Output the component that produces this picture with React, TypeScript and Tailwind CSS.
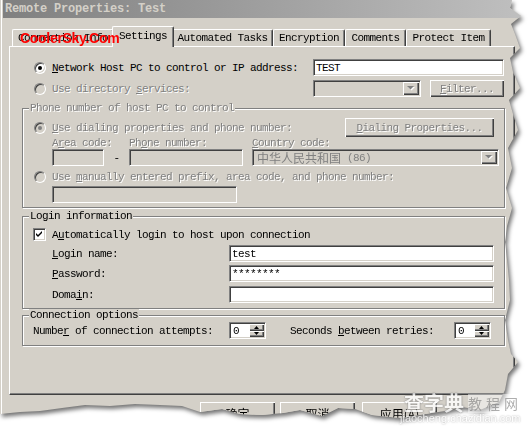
import React from "react";

const sunken =
  "border border-t-[#808080] border-l-[#808080] border-b-white border-r-white shadow-[inset_1px_1px_0_#404040,inset_-1px_-1px_0_#d4d0c8]";
const raised =
  "bg-[#d4d0c8] shadow-[inset_1px_1px_0_#fff,inset_-1px_-1px_0_#404040,inset_-2px_-2px_0_#808080]";
const dim = "text-[#808080] [text-shadow:1px_1px_0_#fff]";
const etched =
  "border border-[#808080] shadow-[inset_1px_1px_0_#fff,1px_1px_0_#fff]";

function Radio({ checked, disabled }: { checked?: boolean; disabled?: boolean }) {
  return (
    <span
      className={`flex items-center justify-center w-[12px] h-[12px] shrink-0 rounded-full border border-t-[#808080] border-l-[#808080] border-b-white border-r-white shadow-[inset_1px_1px_0_#404040,inset_-1px_-1px_0_#d4d0c8] ${
        disabled ? "bg-[#d4d0c8]" : "bg-white"
      }`}
    >
      {checked && (
        <span className={`w-[4px] h-[4px] rounded-full ${disabled ? "bg-[#808080]" : "bg-black"}`} />
      )}
    </span>
  );
}

function Check() {
  return (
    <span className={`flex w-[13px] h-[13px] shrink-0 bg-white ${sunken}`}>
      <svg width="11" height="11" viewBox="0 0 11 11">
        <path d="M2 4 L4 6 L8 2 L8 4 L4 8 L2 6 Z" fill="#000" />
      </svg>
    </span>
  );
}

function Arrow({ up, disabled }: { up?: boolean; disabled?: boolean }) {
  const d = up ? "M3.5 0 L7 3.5 L0 3.5Z" : "M0 0 L7 0 L3.5 3.5Z";
  return (
    <svg width="8" height="5" viewBox="0 0 8 5">
      {disabled && <path d={d} fill="#fff" transform="translate(1 1)" />}
      <path d={d} fill={disabled ? "#808080" : "#000"} />
    </svg>
  );
}

function TinyArrow({ up }: { up?: boolean }) {
  return (
    <svg width="5" height="3" viewBox="0 0 5 3">
      <path d={up ? "M2.5 0 L5 3 L0 3Z" : "M0 0 L5 0 L2.5 3Z"} fill="#000" />
    </svg>
  );
}

function Tab({ children, className }: { children: React.ReactNode; className: string }) {
  return (
    <div
      className={`flex items-center justify-center shrink-0 bg-[#d4d0c8] border-t border-l border-white border-r border-r-[#404040] rounded-t-[2px] shadow-[inset_-1px_0_0_#808080] ${className}`}
    >
      {children}
    </div>
  );
}

function Spin({ className }: { className: string }) {
  return (
    <div className={`flex h-[17px] bg-white p-[1px] ${sunken} ${className}`}>
      <div className="flex-1 flex items-center pl-[2px]">0</div>
      <div className="flex flex-col w-[15px]">
        <div className={`flex-1 flex items-center justify-center ${raised}`}>
          <TinyArrow up />
        </div>
        <div className={`flex-1 flex items-center justify-center ${raised}`}>
          <TinyArrow />
        </div>
      </div>
    </div>
  );
}

export default function App() {
  return (
    <div className="relative w-[528px] h-[426px] overflow-hidden bg-white">
      <div className="drop-shadow-[2px_3px_2px_rgba(0,0,0,0.55)]">
        <div className="w-[528px] h-[426px] flex flex-col bg-[#d4d0c8] text-black font-['Liberation_Mono','Noto_Sans_CJK_SC',monospace] text-[11px] tracking-[-0.6px] leading-[12px] shadow-[inset_1px_0_0_#d4d0c8,inset_2px_0_0_#fff] [clip-path:polygon(0_0,512px_0,510px_8px,521px_16px,511px_24px,515px_34px,520px_48px,510px_58px,513px_72px,520px_88px,509px_100px,513px_114px,518px_130px,508px_148px,512px_168px,506px_188px,512px_208px,507px_226px,505px_242px,507px_260px,509px_280px,510px_300px,505px_320px,508px_340px,511px_354px,518px_362px,508px_374px,505px_390px,499px_402px,480px_410px,462px_407px,445px_411px,425px_414px,400px_418px,372px_415px,355px_409px,338px_408px,322px_416px,300px_410px,283px_413px,262px_415px,240px_414px,222px_409px,200px_412px,182px_406px,160px_405px,135px_404px,110px_406px,85px_405px,62px_408px,40px_411px,20px_412px,0_414px)]">
          {/* title bar */}
          <div className="ml-[3px] h-[18px] shrink-0 flex items-center pl-[2px] bg-gradient-to-r from-[#808080] to-[#c0c0c0] text-[#d4d0c8] font-bold text-[12px] tracking-[-0.2px]">
            Remote Properties: Test
          </div>

          {/* tabs */}
          <div className="relative z-10 mt-[8px] h-[20px] pl-[12px] flex items-end">
            <Tab className="w-[102px] h-[17px]">Connection Info</Tab>
            <Tab className="relative z-10 -ml-[2px] w-[62px] h-[21px] -mb-px pb-[2px]">Settings</Tab>
            <Tab className="-ml-[2px] w-[101px] h-[17px]">Automated Tasks</Tab>
            <Tab className="w-[72px] h-[17px]">Encryption</Tab>
            <Tab className="w-[61px] h-[17px]">Comments</Tab>
            <Tab className="w-[85px] h-[17px]">Protect Item</Tab>
          </div>

          {/* panel */}
          <div className="ml-[9px] w-[506px] h-[349px] shrink-0 flex flex-col border border-t-white border-l-white border-b-[#404040] border-r-[#404040] shadow-[inset_-1px_-1px_0_#808080]">
            <div className="mt-[12px] h-[17px] flex items-center">
              <span className="ml-[24px]">
                <Radio checked />
              </span>
              <span className="ml-[6px] w-[261px]">
                <u>N</u>etwork Host PC to control or IP address:
              </span>
              <div className={`w-[191px] h-[17px] flex items-center pl-[2px] bg-white ${sunken}`}>TEST</div>
            </div>

            <div className="mt-[4px] h-[17px] flex items-center">
              <span className="ml-[24px]">
                <Radio disabled />
              </span>
              <span className={`ml-[6px] w-[261px] ${dim}`}>
                Use directory <u>s</u>ervices:
              </span>
              <div className={`w-[108px] h-[17px] flex justify-end p-[1px] bg-[#d4d0c8] ${sunken}`}>
                <div className={`w-[16px] flex items-center justify-center ${raised}`}>
                  <Arrow disabled />
                </div>
              </div>
              <div className={`ml-[9px] w-[74px] h-[17px] flex items-center justify-center ${raised} ${dim}`}>
                <span>
                  <u>F</u>ilter...
                </span>
              </div>
            </div>

            {/* phone group */}
            <fieldset className={`mt-[5px] ml-[12px] w-[483px] pb-[4px] ${etched}`}>
              <legend className={`ml-[6px] px-[1px] bg-[#d4d0c8] leading-[12px] ${dim}`}>
                Phone number of host PC to control
              </legend>
              <div className="mt-[4px] h-[19px] flex items-center">
                <span className="ml-[11px]">
                  <Radio checked disabled />
                </span>
                <span className={`ml-[6px] w-[293px] ${dim}`}>
                  <u>U</u>se dialing properties and phone number:
                </span>
                <div className={`w-[149px] h-[19px] flex items-center justify-center ${raised} ${dim}`}>
                  <span>
                    <u>D</u>ialing Properties...
                  </span>
                </div>
              </div>
              <div className={`mt-[1px] h-[11px] flex items-center leading-[11px] ${dim}`}>
                <span className="ml-[29px] w-[77px]">
                  A<u>r</u>ea code:
                </span>
                <span className="w-[123px]">
                  Ph<u>o</u>ne number:
                </span>
                <span>
                  <u>C</u>ountry code:
                </span>
              </div>
              <div className="h-[17px] flex items-center">
                <div className={`ml-[29px] w-[52px] h-[17px] bg-[#d4d0c8] ${sunken}`} />
                <span className="w-[25px] text-center">-</span>
                <div className={`w-[114px] h-[17px] bg-[#d4d0c8] ${sunken}`} />
                <div className={`ml-[9px] w-[247px] h-[17px] flex p-[1px] bg-[#d4d0c8] ${sunken}`}>
                  <div className="flex-1 flex items-center pl-[3px] text-[#808080] tracking-normal">
                    <span className="text-[12px] font-['Noto_Sans_CJK_SC',sans-serif]">中华人民共和国</span>
                    <span className="ml-[6px] tracking-[-0.6px]">(86)</span>
                  </div>
                  <div className={`w-[16px] flex items-center justify-center ${raised}`}>
                    <Arrow disabled />
                  </div>
                </div>
              </div>
              <div className="mt-[5px] h-[12px] flex items-center">
                <span className="ml-[11px]">
                  <Radio disabled />
                </span>
                <span className={`ml-[6px] ${dim}`}>
                  Use <u>m</u>anually entered prefix, area code, and phone number:
                </span>
              </div>
              <div className={`mt-[3px] ml-[29px] w-[185px] h-[17px] bg-[#d4d0c8] ${sunken}`} />
            </fieldset>

            {/* login group */}
            <fieldset className={`mt-[2px] ml-[12px] w-[483px] pb-[5px] ${etched}`}>
              <legend className="ml-[6px] px-[1px] bg-[#d4d0c8] leading-[12px]">Login information</legend>
              <div className="mt-[6px] h-[13px] flex items-center">
                <span className="ml-[10px]">
                  <Check />
                </span>
                <span className="ml-[6px]">
                  A<u>u</u>tomatically login to host upon connection
                </span>
              </div>
              <div className="mt-[4px] h-[17px] flex items-center">
                <span className="ml-[29px] w-[177px]">
                  <u>L</u>ogin name:
                </span>
                <div className={`w-[265px] h-[17px] flex items-center pl-[2px] bg-white ${sunken}`}>test</div>
              </div>
              <div className="mt-[3px] h-[17px] flex items-center">
                <span className="ml-[29px] w-[177px]">
                  <u>P</u>assword:
                </span>
                <div className={`w-[265px] h-[17px] flex items-center pl-[2px] bg-white ${sunken}`}>********</div>
              </div>
              <div className="mt-[4px] h-[17px] flex items-center">
                <span className="ml-[29px] w-[177px]">
                  Doma<u>i</u>n:
                </span>
                <div className={`w-[265px] h-[17px] bg-white ${sunken}`} />
              </div>
            </fieldset>

            {/* connection options */}
            <fieldset className={`ml-[12px] w-[483px] pb-[6px] ${etched}`}>
              <legend className="ml-[6px] px-[1px] bg-[#d4d0c8] leading-[12px]">Connection options</legend>
              <div className="mt-[1px] h-[17px] flex items-center">
                <span className="ml-[10px] w-[196px]">
                  Numbe<u>r</u> of connection attempts:
                </span>
                <Spin className="w-[37px]" />
                <span className="ml-[24px] w-[164px]">
                  Seconds <u>b</u>etween retries:
                </span>
                <Spin className="w-[37px]" />
              </div>
            </fieldset>
          </div>

          {/* dialog buttons */}
          <div className="mt-[7px] flex font-['Noto_Sans_CJK_SC',sans-serif] text-[12px] tracking-normal">
            <div className={`ml-[200px] w-[75px] h-[23px] flex items-center justify-center ${raised}`}>确定</div>
            <div className={`ml-[5px] w-[75px] h-[23px] flex items-center justify-center ${raised}`}>取消</div>
            <div className={`ml-[7px] w-[75px] h-[23px] flex items-center justify-center ${raised}`}>
              应用(<u>A</u>)
            </div>
          </div>
        </div>
      </div>

      {/* watermarks */}
      <div className="absolute left-[20px] top-[30px] text-[14px] leading-[16px] font-bold tracking-[-0.3px] text-[#ff0000] font-['Liberation_Sans',Arial,sans-serif]">
        CoolerSky.Com
      </div>
      <div className="absolute left-[404px] top-[392px] flex items-center opacity-80">
        <span className="text-[20px] leading-[22px] font-bold text-white font-['Noto_Sans_CJK_SC',sans-serif] [text-shadow:0_0_2px_#777,0_0_1px_#777]">
          查字典
        </span>
        <span className="ml-[4px] w-[54px] h-[19px] flex items-center justify-center bg-white/60 text-[#9a9a9a] text-[14px] tracking-[4px] font-['Noto_Sans_CJK_SC',sans-serif]">
          教程网
        </span>
      </div>
      <div className="absolute left-[400px] top-[412px] text-[11px] leading-[12px] text-white font-['Liberation_Sans',Arial,sans-serif] [text-shadow:0_0_2px_#888] opacity-80">
        jiaocheng.chazidian.com
      </div>
    </div>
  );
}
